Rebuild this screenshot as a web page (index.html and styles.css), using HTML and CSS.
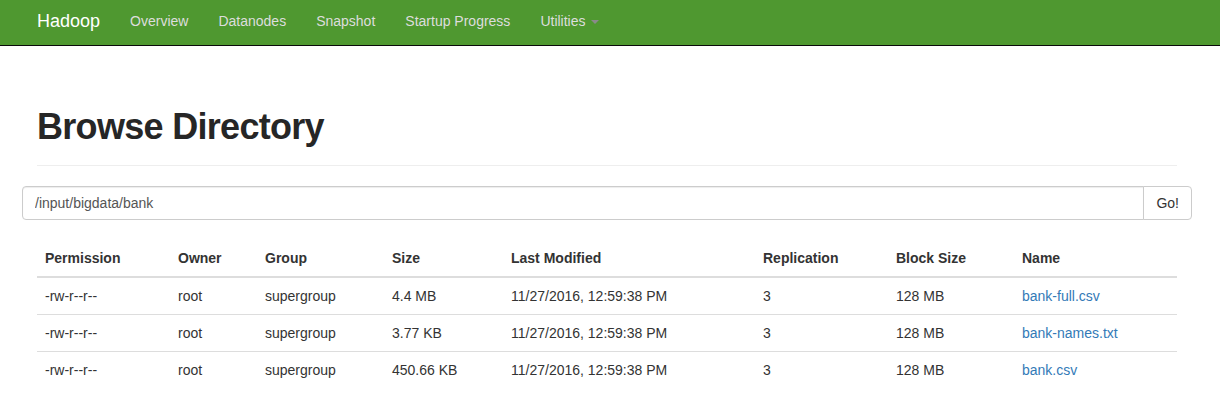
FILE: index.html
```html
<!DOCTYPE html>
<html>
<head>
<meta charset="utf-8">
<title>Browsing HDFS</title>
<link rel="stylesheet" href="styles.css">
</head>
<body>
<nav class="navbar">
  <div class="container nav-container">
    <a class="brand" href="#">Hadoop</a>
    <ul class="nav">
      <li><a href="#">Overview</a></li>
      <li><a href="#">Datanodes</a></li>
      <li><a href="#">Snapshot</a></li>
      <li><a href="#">Startup Progress</a></li>
      <li><a href="#">Utilities <span class="caret"></span></a></li>
    </ul>
  </div>
</nav>
<div class="container main">
  <div class="page-header">
    <h1>Browse Directory</h1>
  </div>
  <form class="input-group">
    <input class="path-input" type="text" value="/input/bigdata/bank">
    <button class="go-btn" type="button">Go!</button>
  </form>
  <table class="table">
    <thead>
      <tr>
        <th class="c-perm">Permission</th>
        <th class="c-owner">Owner</th>
        <th class="c-group">Group</th>
        <th class="c-size">Size</th>
        <th class="c-mod">Last Modified</th>
        <th class="c-rep">Replication</th>
        <th class="c-block">Block Size</th>
        <th class="c-name">Name</th>
      </tr>
    </thead>
    <tbody>
      <tr>
        <td>-rw-r--r--</td><td>root</td><td>supergroup</td><td>4.4 MB</td>
        <td>11/27/2016, 12:59:38 PM</td><td>3</td><td>128 MB</td>
        <td><a href="#">bank-full.csv</a></td>
      </tr>
      <tr>
        <td>-rw-r--r--</td><td>root</td><td>supergroup</td><td>3.77 KB</td>
        <td>11/27/2016, 12:59:38 PM</td><td>3</td><td>128 MB</td>
        <td><a href="#">bank-names.txt</a></td>
      </tr>
      <tr>
        <td>-rw-r--r--</td><td>root</td><td>supergroup</td><td>450.66 KB</td>
        <td>11/27/2016, 12:59:38 PM</td><td>3</td><td>128 MB</td>
        <td><a href="#">bank.csv</a></td>
      </tr>
    </tbody>
  </table>
</div>
</body>
</html>
```
FILE: styles.css
```css
* { box-sizing: border-box; }
html, body { margin: 0; padding: 0; background: #fff; }
body {
  font-family: "Liberation Sans", Arial, Helvetica, sans-serif;
  font-size: 14px;
  line-height: 20px;
  color: #333;
}
a { color: #337ab7; text-decoration: none; }

.container {
  width: 1170px;
  margin-left: 22px;
  padding: 0 15px;
}

.navbar {
  background-color: #4f9830;
  border-bottom: 1px solid #0a0a0a;
  height: 46px;
}
.nav-container {
  display: flex;
  align-items: flex-start;
  height: 45px;
}
.brand {
  display: block;
  padding: 11px 15px 14px 0;
  font-size: 18px;
  line-height: 20px;
  color: #fff;
}
.nav {
  display: flex;
  list-style: none;
  margin: 0;
  padding: 0;
}
.nav a {
  display: block;
  padding: 11px 15px 14px;
  line-height: 20px;
  color: #ddd;
}
.caret {
  display: inline-block;
  width: 0;
  height: 0;
  margin-left: 2px;
  vertical-align: middle;
  border-top: 4px solid #8a8a8a;
  border-left: 4px solid transparent;
  border-right: 4px solid transparent;
}

.page-header {
  margin: 61px 0 20px;
  padding-bottom: 9px;
  border-bottom: 1px solid #eee;
}
.page-header h1 {
  margin: 0 0 10px;
  font-size: 36px;
  line-height: 39px;
  font-weight: bold;
  color: #262626;
  letter-spacing: -0.7px;
}

.input-group {
  display: flex;
  margin: 0 -15px;
}
.path-input {
  flex: 1;
  height: 34px;
  padding: 6px 12px;
  font-family: inherit;
  font-size: 14px;
  line-height: 20px;
  color: #555;
  background: #fff;
  border: 1px solid #ccc;
  border-radius: 4px 0 0 4px;
  box-shadow: inset 0 1px 1px rgba(0,0,0,.075);
  outline: none;
}
.go-btn {
  height: 34px;
  margin-left: -1px;
  padding: 6px 12px;
  font-family: inherit;
  font-size: 14px;
  line-height: 20px;
  color: #333;
  background: #fff;
  border: 1px solid #ccc;
  border-radius: 0 4px 4px 0;
}

.table {
  width: 100%;
  margin-top: 20px;
  border-collapse: collapse;
  table-layout: fixed;
}
.table th {
  text-align: left;
  font-weight: bold;
  padding: 8px;
  line-height: 20px;
  border-bottom: 2px solid #ddd;
}
.table td {
  padding: 8px;
  line-height: 20px;
  border-top: 1px solid #ddd;
}
.c-perm { width: 133px; }
.c-owner { width: 87px; }
.c-group { width: 127px; }
.c-size { width: 119px; }
.c-mod { width: 252px; }
.c-rep { width: 133px; }
.c-block { width: 126px; }
.c-name { width: 163px; }
```
